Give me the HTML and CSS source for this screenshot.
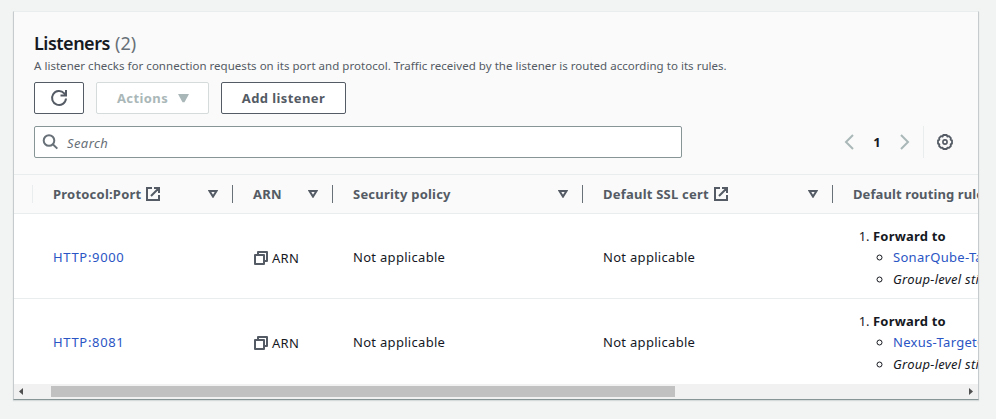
FILE: index.html
```html
<!DOCTYPE html>
<html lang="en">
<head>
<meta charset="utf-8">
<title>Listeners</title>
<link rel="stylesheet" href="styles.css">
</head>
<body>
<svg class="defs" width="0" height="0" aria-hidden="true">
  <symbol id="external" viewBox="0 0 14 14"><path d="M6 1H1v12h12V8M8 1h5v5M13 1L5 9" fill="none" stroke="currentColor" stroke-width="2"/></symbol>
  <symbol id="sort" viewBox="0 0 10 8"><path d="M1.500 1h7L5 6.600z" fill="none" stroke="currentColor" stroke-width="2"/></symbol>
  <symbol id="copy" viewBox="0 0 14 14"><path d="M1 4h9v9H1zM4 4V1h9v9h-3" fill="none" stroke="currentColor" stroke-width="2" stroke-linejoin="round"/></symbol>
</svg>
<main class="card">
  <header class="header">
    <h2 class="title"><span class="name">Listeners</span> <span class="count">(2)</span></h2>
    <p class="description">A listener checks for connection requests on its port and protocol. Traffic received by the listener is routed according to its rules.</p>
    <div class="actions">
      <button class="button refresh" aria-label="Refresh"><svg width="18" height="18" viewBox="0 0 18 18"><path d="M16 9.500A7 7 0 1 1 14.200 4.300L16 6M16 1v5.500h-5.500" fill="none" stroke="currentColor" stroke-width="2"/></svg></button>
      <button class="button disabled"><span>Actions</span><svg width="11" height="9" viewBox="0 0 11 9"><path d="M0 0h11L6.500 8.300h-2z" fill="currentColor"/></svg></button>
      <button class="button add">Add listener</button>
    </div>
    <div class="tools">
      <div class="search">
        <svg width="16" height="16" viewBox="0 0 16 16"><circle cx="7" cy="6.500" r="5.300" fill="none" stroke="currentColor" stroke-width="2"/><path d="M10.800 10.300l4.500 4.300" stroke="currentColor" stroke-width="2"/></svg>
        <span>Search</span>
      </div>
      <div class="pager">
        <svg width="10" height="16" viewBox="0 0 10 16"><path d="M9 1L2 8l7 7" fill="none" stroke="currentColor" stroke-width="2"/></svg>
        <span class="page">1</span>
        <svg width="10" height="16" viewBox="0 0 10 16"><path d="M1 1l7 7-7 7" fill="none" stroke="currentColor" stroke-width="2"/></svg>
      </div>
      <div class="settings"><svg width="16" height="16" viewBox="0 0 16 16"><path d="M6.300 1h3.400l.7 1.500 1.600-.3 1.900 1.900-.3 1.500L15 6.400v3.200l-1.400.8.3 1.600-1.900 1.900-1.600-.3L9.700 15H6.300l-.7-1.400-1.600.3L2.100 12l.3-1.600L1 9.600V6.400l1.400-.8-.3-1.500L4 2.200l1.600.3z" fill="none" stroke="currentColor" stroke-width="1.800" stroke-linejoin="round"/><circle cx="8" cy="8" r="2.100" fill="none" stroke="currentColor" stroke-width="1.600"/></svg></div>
    </div>
  </header>
  <div class="table">
    <div class="row head">
      <div class="cell select"></div>
      <div class="cell"><span>Protocol:Port</span><svg class="external" width="14" height="14"><use href="#external"/></svg><svg class="sort" width="10" height="8"><use href="#sort"/></svg></div>
      <div class="cell"><span>ARN</span><svg class="sort" width="10" height="8"><use href="#sort"/></svg></div>
      <div class="cell"><span>Security policy</span><svg class="sort" width="10" height="8"><use href="#sort"/></svg></div>
      <div class="cell"><span>Default SSL cert</span><svg class="external" width="14" height="14"><use href="#external"/></svg><svg class="sort" width="10" height="8"><use href="#sort"/></svg></div>
      <div class="cell"><span class="last">Default routing rule</span></div>
    </div>
    <div class="row">
      <div class="cell select"></div>
      <div class="cell"><a class="port">HTTP:9000</a></div>
      <div class="cell arn"><svg width="14" height="14"><use href="#copy"/></svg><span>ARN</span></div>
      <div class="cell"><span class="na">Not applicable</span></div>
      <div class="cell"><span class="na">Not applicable</span></div>
      <div class="cell"><ol class="rules"><li><b>Forward to</b><ul><li><a>SonarQube-TargetGroup</a></li><li><i>Group-level stickiness: Off</i></li></ul></li></ol></div>
    </div>
    <div class="row">
      <div class="cell select"></div>
      <div class="cell"><a class="port">HTTP:8081</a></div>
      <div class="cell arn"><svg width="14" height="14"><use href="#copy"/></svg><span>ARN</span></div>
      <div class="cell"><span class="na">Not applicable</span></div>
      <div class="cell"><span class="na">Not applicable</span></div>
      <div class="cell"><ol class="rules"><li><b>Forward to</b><ul><li><a>Nexus-TargetGroup</a></li><li><i>Group-level stickiness: Off</i></li></ul></li></ol></div>
    </div>
  </div>
  <div class="scrollbar">
    <svg width="4" height="7" viewBox="0 0 4 7"><path d="M4 0v7L0 3.500z" fill="#505050"/></svg>
    <div class="track"><div class="thumb"></div></div>
    <svg width="4" height="7" viewBox="0 0 4 7"><path d="M0 0v7l4-3.500z" fill="#505050"/></svg>
  </div>
</main>
</body>
</html>
```

FILE: styles.css
```css
* { box-sizing: border-box; }
body {
  margin: 0;
  height: 419px;
  padding: 11px 17px 19px 13px;
  overflow: hidden;
  background: #f2f3f3;
  color: #16191f;
  font: 13px/20px "Noto Sans", sans-serif;
}
svg { display: block; flex: none; }
.defs { position: absolute; }
.card {
  height: 389px;
  border: 1px solid #c6cccd;
  border-top-color: #eaeded;
  border-bottom-color: #879596;
  box-shadow: 0 1px 1px #d5dbdb;
  background: #fff;
  overflow: hidden;
}
.header {
  height: 163px;
  padding: 20px 20px 0;
  background: #fafafa;
  border-bottom: 1px solid #eaeded;
}
.title { margin: 0; font-size: 18px; line-height: 23px; font-weight: 400; white-space: nowrap; }
.name { font-weight: 600; letter-spacing: -0.5px; }
.count { margin-left: 0.5px; color: #687078; }
.description { margin: 3px 0 0; font-size: 11.5px; letter-spacing: 0.03px; line-height: 16px; color: #545b64; white-space: nowrap; }
.actions { display: flex; gap: 12px; margin-top: 8px; }
.button {
  display: flex;
  align-items: center;
  justify-content: center;
  height: 32px;
  padding: 0;
  border: 1px solid #545b64;
  border-radius: 2px;
  background: #fff;
  color: #545b64;
  font: 700 13px/20px "Noto Sans", sans-serif;
  letter-spacing: 0.4px;
}
.refresh { width: 50px; }
.disabled { width: 113px; gap: 10px; padding-left: 1px; border-color: #d5dbdb; color: #aab7b8; }
.add { width: 125px; }
.tools { display: flex; align-items: center; margin-top: 12px; }
.search {
  display: flex;
  align-items: center;
  gap: 9px;
  width: 648px;
  height: 32px;
  padding: 0 7px;
  border: 1px solid #879596;
  border-radius: 2px;
  background: #fff;
  color: #687078;
  font-style: italic;
  letter-spacing: 0.4px;
}
.search span { padding-top: 1px; }
.pager { display: flex; align-items: center; margin-left: 162px; color: #aab7b8; }
.page { width: 46px; text-align: center; font-weight: 700; color: #16191f; }
.settings { display: flex; align-items: center; height: 32px; margin-left: 13px; padding-left: 13px; border-left: 1px solid #eaeded; color: #545b64; }
.row { display: grid; grid-template-columns: 19px 200px 100px 250px 250px 300px; height: 85px; border-bottom: 1px solid #eaeded; white-space: nowrap; }
.row:last-child { border-bottom-color: transparent; }
.cell { display: flex; align-items: center; padding: 2px 14px 0 20px; }
.cell.select { padding: 0; }
.head { height: 39px; align-items: center; background: #fafafa; color: #545b64; font-weight: 700; letter-spacing: 0.22px; }
.head .cell { height: 18px; padding-top: 0; border-right: 1px solid #687078; }
.head .cell.select { border-right-color: #eaeded; }
.head .last { letter-spacing: 0.1px; }
.external { margin-left: 5px; }
.sort { margin-left: auto; }
a { color: #2a55c4; letter-spacing: 0.3px; }
.port { letter-spacing: 0.67px; }
.na { letter-spacing: 0.3px; }
.arn { padding-left: 21px; padding-top: 4px; gap: 4px; letter-spacing: 0.3px; }
.arn svg { color: #545b64; }
.rules { margin: 0; padding: 1px 0 0 20px; line-height: 21px; }
.rules b { letter-spacing: 0.2px; }
.rules i { letter-spacing: 0.25px; }
.rules ul { margin: 0; padding: 0 0 0 20px; list-style: circle; line-height: 22px; }
.rules ul li:first-child { line-height: 21px; }
.scrollbar { display: flex; align-items: center; justify-content: space-between; height: 15px; padding: 0 5px; background: #f1f1f1; }
.track { width: 946px; padding-left: 28px; }
.thumb { width: 624px; height: 11px; background: #c1c1c1; }
```
